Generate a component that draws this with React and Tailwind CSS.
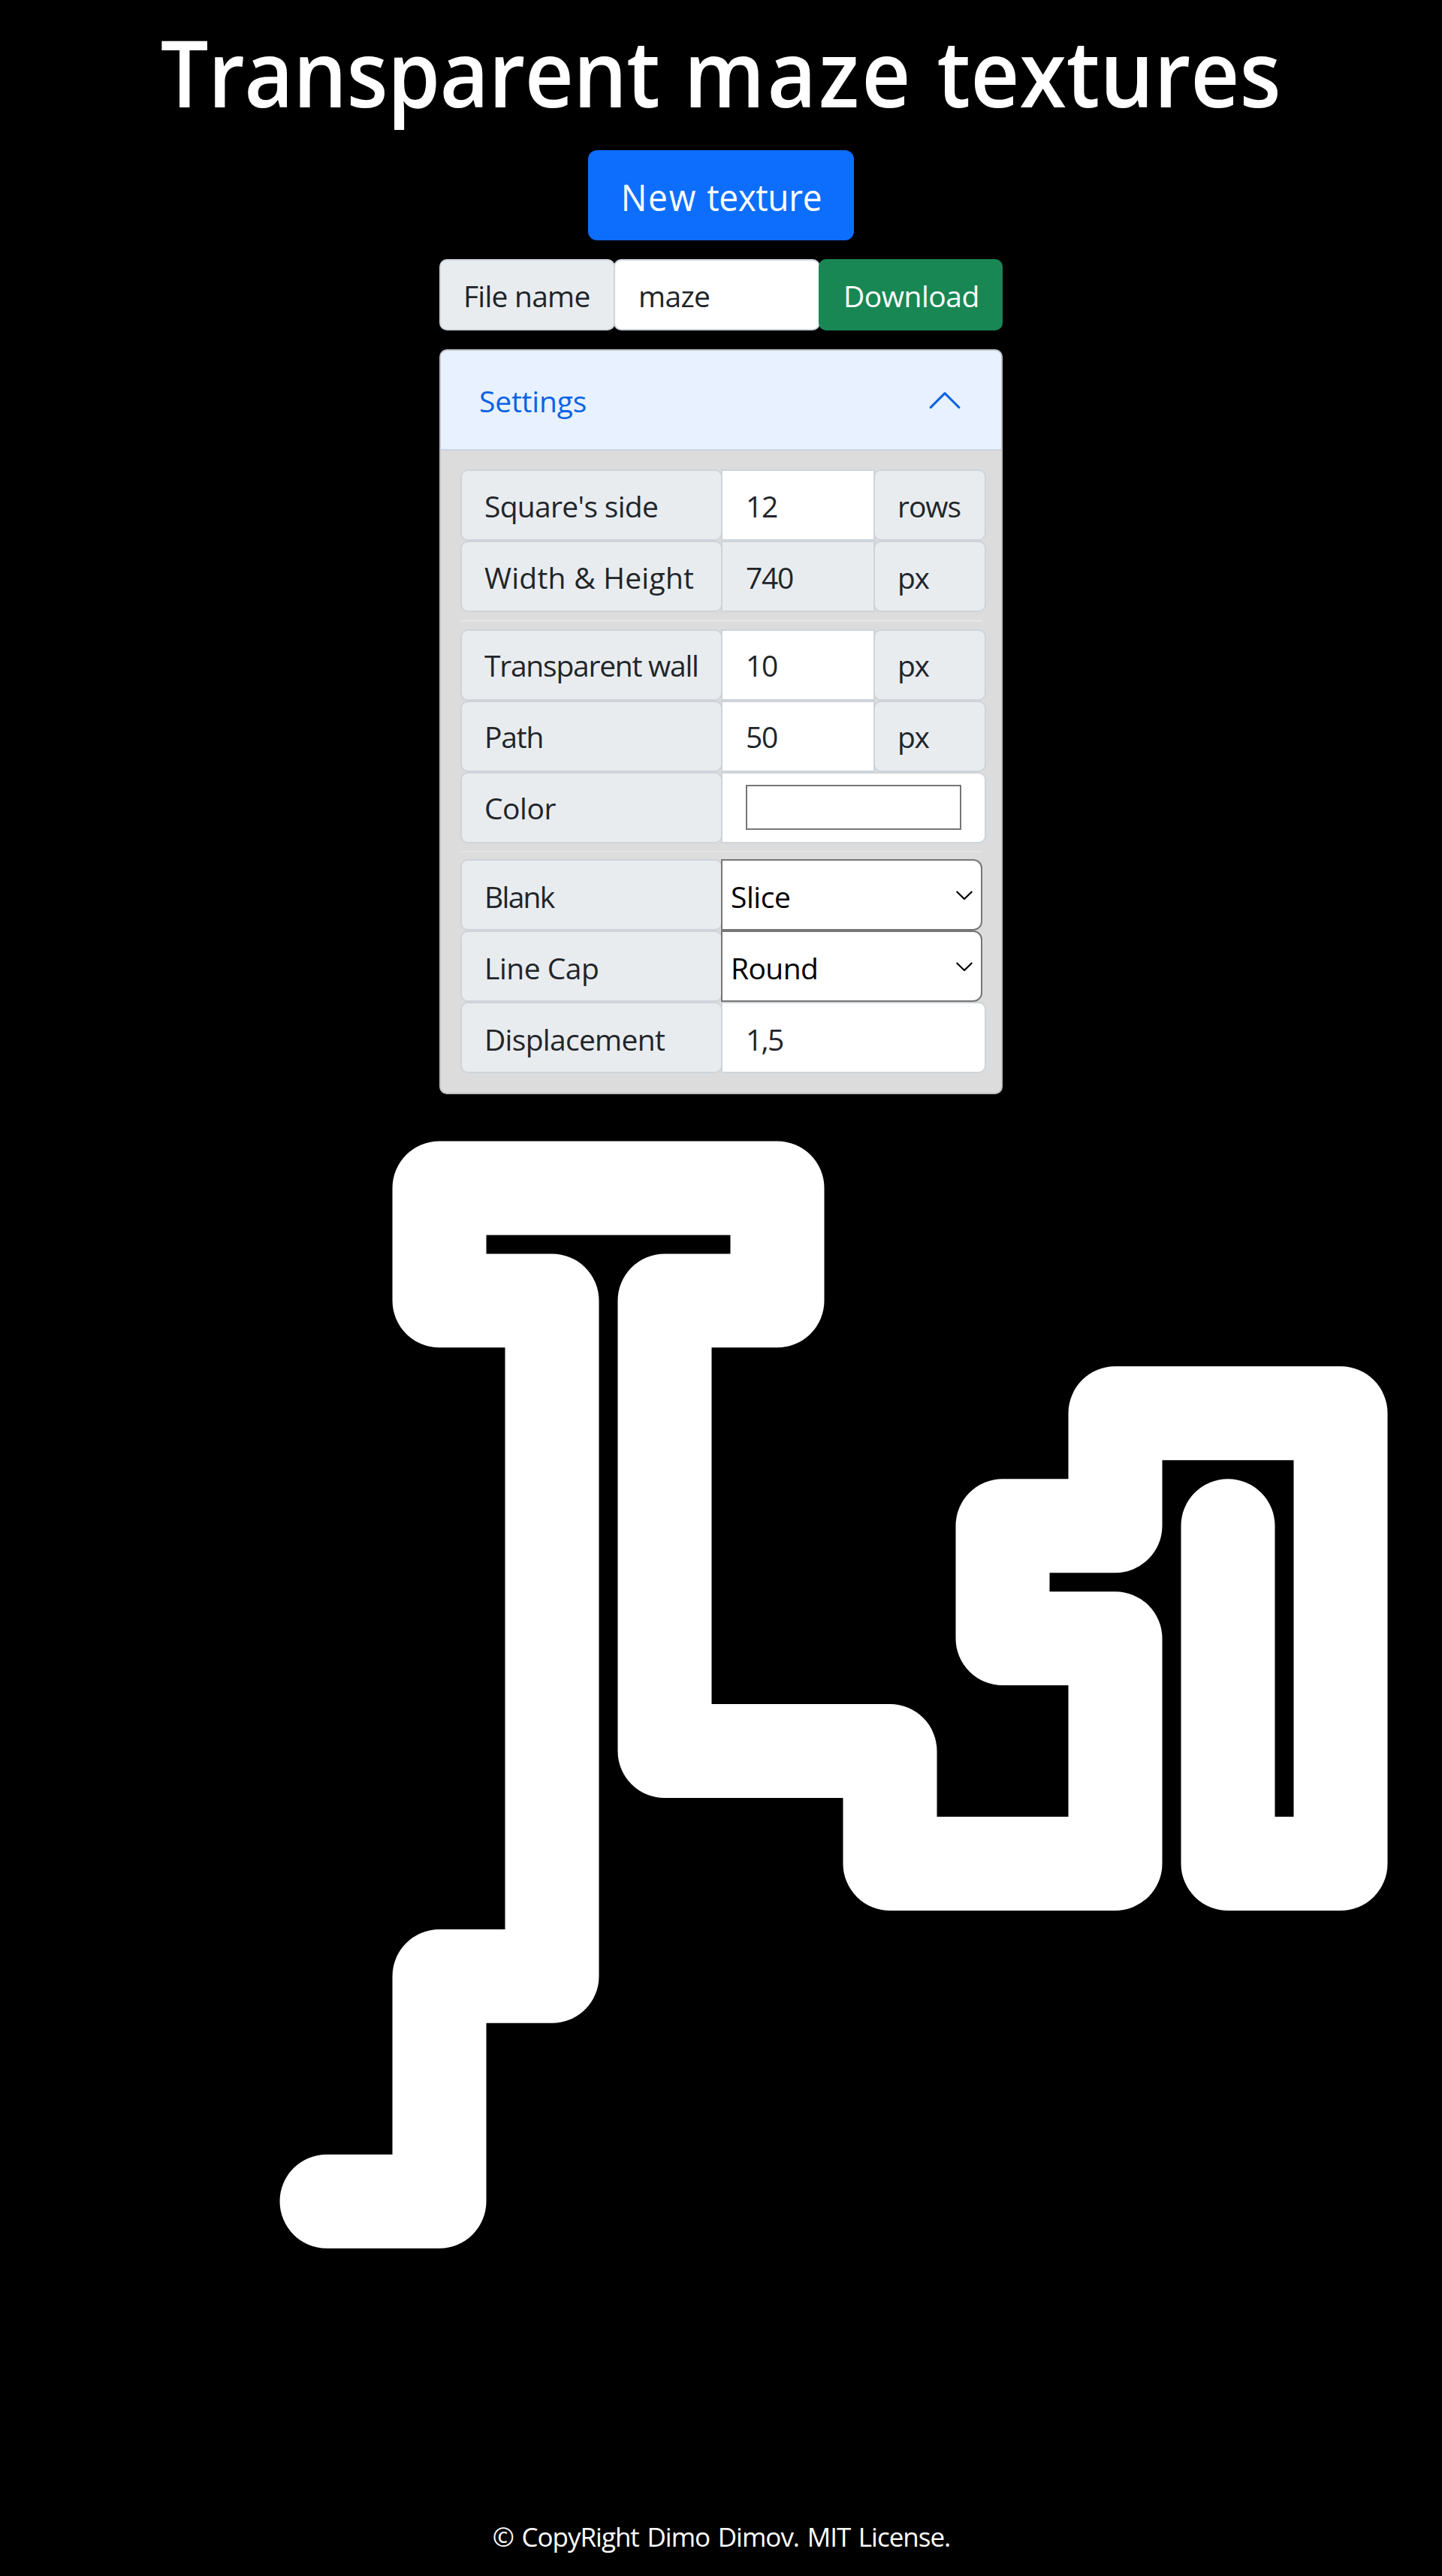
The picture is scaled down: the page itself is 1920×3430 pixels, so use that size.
import React from 'react';

const BOX = 'flex h-[95px] shrink-0 items-center border-2 border-[#ced4da] whitespace-nowrap';

function Label({ children, spacing, pad = 'pt-[2px]' }) {
  return (
    <div className={`${BOX} w-[349px] rounded-[10px] bg-[#e9ecef] pl-[30px] ${pad} ${spacing}`}>{children}</div>
  );
}

function Value({ children, spacing = 'tracking-[-1.3px]', look = 'w-[205px] bg-white', pad = 'pt-[2px]' }) {
  return <div className={`${BOX} z-10 -ml-[2px] pl-[31px] ${look} ${pad} ${spacing}`}>{children}</div>;
}

function Unit({ children, spacing = 'tracking-[-1.3px]', pad = 'pt-[2px]' }) {
  return (
    <div className={`${BOX} -ml-[2px] w-[150px] rounded-[10px] bg-[#e9ecef] pl-[30px] ${pad} ${spacing}`}>
      {children}
    </div>
  );
}

function Select({ children, spacing }) {
  return (
    <div
      className={`z-10 -ml-[2px] flex h-[95px] w-[348px] items-center justify-between rounded-r-[12px] border-2 border-[#767676] bg-white pr-[10px] pl-[11px] text-black ${spacing}`}
    >
      <span className="pt-[4px]">{children}</span>
      <svg className="h-[12px] w-[24px]" viewBox="0 0 24 12" fill="none" stroke="#000" strokeWidth="2.2">
        <path d="M1.7 1 12 11 22.3 1" />
      </svg>
    </div>
  );
}

export default function App() {
  return (
    <div className="flex h-[3430px] flex-col items-center overflow-hidden bg-black font-['Open_Sans',sans-serif] text-[39px] leading-none text-[#212529]">
      <h1 className="flex h-[189px] shrink-0 items-center pt-[1px] text-[123px] font-semibold whitespace-nowrap text-white">
        <span className="inline-block scale-x-[0.92] [word-spacing:3px]">
          <span className="tracking-[-0.75px]">Transparent</span> <span className="tracking-[3.2px]">maze</span> textures
        </span>
      </h1>

      <button className="mt-[11px] flex h-[120px] w-[354px] shrink-0 items-center justify-center rounded-[12px] bg-[#0d6efd] pt-[3px] text-[50px] whitespace-nowrap text-white">
        <span className="inline-block scale-x-[0.92] [word-spacing:1px]">
          <span className="tracking-[2px]">New</span> <span className="tracking-[-0.4px]">texture</span>
        </span>
      </button>

      <div className="mt-[25px] flex w-[750px]">
        <div className={`${BOX} w-[234px] rounded-[10px] bg-[#e9ecef] pt-[2px] pl-[30px] tracking-[-0.76px]`}>File name</div>
        <div className={`${BOX} -ml-[2px] w-[275px] rounded-[10px] bg-white pt-[2px] pl-[31px] tracking-[-0.7px]`}>maze</div>
        <button className="z-10 -ml-[2px] flex h-[95px] w-[245px] items-center rounded-[10px] bg-[#198754] pt-[2px] pl-[33px] tracking-[-0.5px] text-white">
          Download
        </button>
      </div>

      <section className="mt-[25px] h-[992px] w-[750px] shrink-0 overflow-hidden rounded-[10px] border-2 border-[#c1c1c1] bg-[#dcdcdc]">
        <div className="-mx-[2px] -mt-[2px] flex h-[135px] items-center justify-between rounded-t-[10px] border-2 border-[#cad5e5] bg-[#e7f1ff] pr-[50px] pl-[51px] text-[#0c63e4]">
          <span className="pt-[2px] tracking-[-0.2px]">Settings</span>
          <svg className="size-[50px]" viewBox="0 0 16 16" fill="none" stroke="#0c63e4" strokeLinecap="round" strokeLinejoin="round">
            <path d="M2 11 8 5l6 6" />
          </svg>
        </div>

        <div className="pt-[25px] pl-[26px]">
          <div className="flex">
            <Label spacing="tracking-[-0.69px]">Square's side</Label>
            <Value>12</Value>
            <Unit spacing="tracking-[-1.04px]">rows</Unit>
          </div>
          <div className="flex">
            <Label spacing="tracking-[0.25px]">Width &amp; Height</Label>
            <Value look="w-[205px] bg-[#e9ecef]">740</Value>
            <Unit>px</Unit>
          </div>
          <div className="mt-[10px] mb-[10px] h-[3px] w-[695px] bg-[#e4e4e4]" />
          <div className="flex">
            <Label pad="pt-0" spacing="tracking-[-1.24px]">Transparent wall</Label>
            <Value pad="pt-0">10</Value>
            <Unit pad="pt-0">px</Unit>
          </div>
          <div className="flex">
            <Label pad="pt-0" spacing="tracking-[-1.2px]">Path</Label>
            <Value pad="pt-0">50</Value>
            <Unit pad="pt-0">px</Unit>
          </div>
          <div className="flex">
            <Label pad="pt-0" spacing="tracking-[-0.46px]">Color</Label>
            <Value pad="pt-0" look="w-[353px] rounded-r-[10px] bg-white">
              <span className="mb-[2px] h-[60px] w-[287px] border-2 border-[#767676]" />
            </Value>
          </div>
          <div className="mt-[10px] mb-[9px] h-[2px] w-[695px] bg-[#e4e4e4]" />
          <div className="flex">
            <Label pad="pt-[4px]" spacing="tracking-[-1.7px]">Blank</Label>
            <Select spacing="tracking-[-0.44px]">Slice</Select>
          </div>
          <div className="flex">
            <Label pad="pt-[4px]" spacing="tracking-[-0.48px]">Line Cap</Label>
            <Select spacing="tracking-[-0.59px]">Round</Select>
          </div>
          <div className="flex">
            <Label pad="pt-[4px]" spacing="tracking-[-0.7px]">Displacement</Label>
            <Value pad="pt-[4px]" look="w-[353px] rounded-r-[10px] bg-white" spacing="tracking-[-1.7px]">1,5</Value>
          </div>
        </div>
      </section>

      <svg className="mt-[25px] h-[1849px] w-[1850px] shrink-0" viewBox="0 0 740 740" preserveAspectRatio="none">
        <path
          d="M160 580H220V460H280V100H220V40H400V100H340V340H460V400H580V280H520V220H580V160H700V400H640V220"
          fill="none"
          stroke="#fff"
          strokeWidth="50"
          strokeLinecap="round"
          strokeLinejoin="round"
        />
      </svg>

      <footer className="mt-[29px] pl-px text-[35px] tracking-[-1px] whitespace-nowrap text-white [word-spacing:2.5px]">
        © CopyRight Dimo Dimov. MIT License.
      </footer>
    </div>
  );
}
